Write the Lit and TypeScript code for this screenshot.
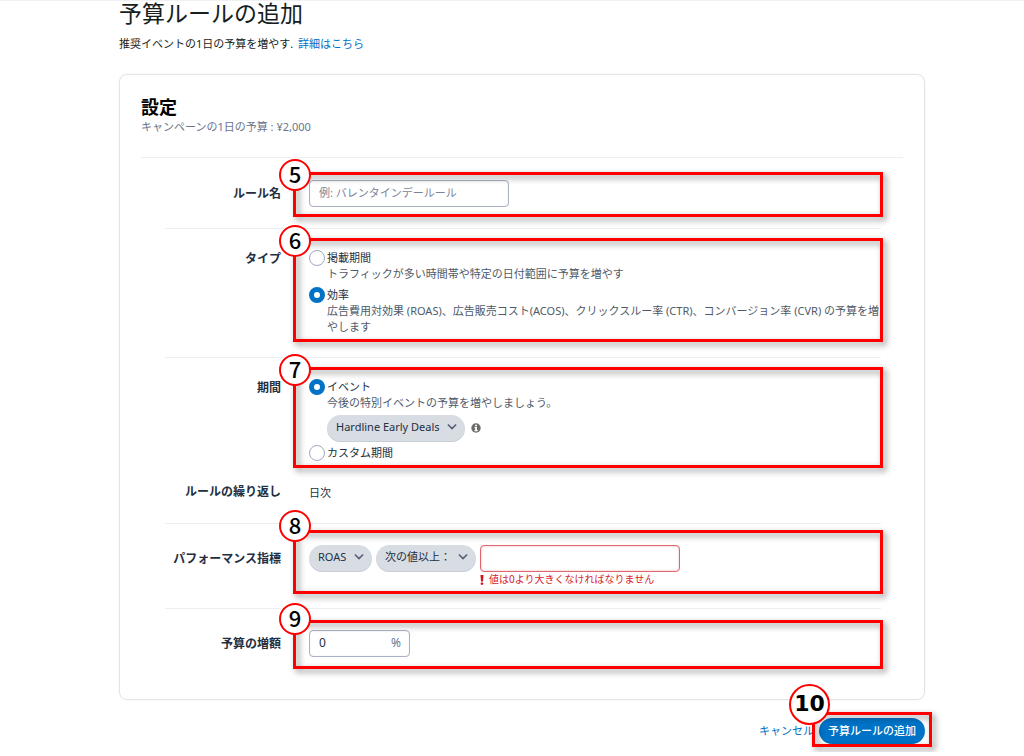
import { LitElement, html, css, svg, nothing } from "lit";
import { customElement, property, state } from "lit/decorators.js";

const chevron = html`<svg class="chevron" viewBox="0 0 10 6" width="10" height="6" aria-hidden="true">
  ${svg`<path d="M1.4 1 L5 4.6 L8.6 1" fill="none" stroke="#5a6478" stroke-width="1.7" stroke-linecap="round" stroke-linejoin="round"/>`}
</svg>`;

const infoIcon = html`<svg class="info" viewBox="0 0 10 10" width="10" height="10" role="img" aria-label="情報">
  ${svg`<circle cx="5" cy="5" r="4.7" fill="#6b6b6b"/>
  <rect x="4.1" y="1.7" width="1.9" height="1.6" fill="#fff"/>
  <path d="M3.5 4.1h2.5v3h.7v1.1H3.4V7.1h.8V5.2h-.7z" fill="#fff"/>`}
</svg>`;

const alertIcon = html`<svg viewBox="0 0 4 10" width="4" height="10" aria-hidden="true">
  ${svg`<path d="M.5 0h3l-.5 6.4H1z" fill="#d6141c"/><rect x=".7" y="7.5" width="2.5" height="2.3" rx=".6" fill="#d6141c"/>`}
</svg>`;

/** Numbered red frame laid over the part of the form that a step explains. */
@customElement("step-callout")
export class StepCallout extends LitElement {
  @property({ type: Number }) step = 0;

  static styles = css`
    :host {
      position: absolute;
      pointer-events: none;
      box-sizing: border-box;
    }
    .frame {
      box-sizing: border-box;
      width: 100%;
      height: 100%;
      border: 3px solid #fe0000;
      filter: drop-shadow(3px 3px 3px rgba(0, 0, 0, 0.45));
    }
    .badge {
      position: absolute;
      left: -14px;
      top: var(--badge-top, -13px);
      box-sizing: border-box;
      width: 32px;
      height: 32px;
      padding-bottom: 5px;
      border: 2px solid #fe0000;
      border-radius: 50%;
      background: #fff;
      color: #000;
      display: flex;
      align-items: center;
      justify-content: center;
      font: 500 22px/22px "Noto Sans CJK JP", sans-serif;
    }
    .wide {
      left: -23px;
      width: 41px;
      height: 41px;
      padding-bottom: 1px;
      font: 700 22px/36px "DejaVu Sans", sans-serif;
    }
  `;

  render() {
    return html`<div class="frame"></div>
      <div class="badge ${this.step > 9 ? "wide" : ""}">${this.step}</div>`;
  }
}

@customElement("app-root")
export class AppRoot extends LitElement {
  @state() private type = "performance";
  @state() private period = "event";

  static styles = css`
    :host {
      display: block;
      border-top: 1px solid #f0f1f2;
      background: #fff;
      color: #232f3f;
      font: 11px/16px "Noto Sans", "Noto Sans CJK JP", sans-serif;
    }
    * {
      box-sizing: border-box;
    }
    .page {
      padding: 0 99px 8px 119px;
    }
    h1,
    h2,
    p {
      margin: 0;
    }
    h1 {
      color: #161e1e;
      font-size: 23px;
      line-height: 25px;
      font-weight: 400;
    }
    a {
      color: #0073c7;
      text-decoration: none;
    }
    .lead {
      margin-top: 10px;
      color: #161e1e;
    }
    .lead a {
      margin-left: 2px;
    }
    .card {
      margin-top: 22px;
      padding: 21px 21px 22px;
      border: 1px solid #e2e4e6;
      border-radius: 8px;
      box-shadow: 0 0 2px #e9ebed;
    }
    h2 {
      color: #000;
      font-size: 18px;
      line-height: 22px;
      font-weight: 700;
    }
    .budget {
      margin-top: 1px;
      color: #6c7489;
    }
    .rows {
      margin-top: 22px;
      padding: 1px 22px 20px 24px;
      border-top: 1px solid #eceef0;
    }
    .row {
      display: grid;
      grid-template-columns: 116px 1fr;
      column-gap: 28px;
      padding-top: 21px;
    }
    .ruled {
      padding-bottom: 21px;
      border-bottom: 1px solid #eceef0;
    }
    .label {
      text-align: right;
      font-size: 12px;
      font-weight: 700;
      line-height: 18px;
      white-space: nowrap;
    }
    .centered {
      line-height: 27px;
    }
    .control {
      position: relative;
    }
    .choices {
      padding-bottom: 1px;
    }
    .text {
      line-height: 19px;
    }
    step-callout {
      left: -16px;
      right: -2px;
      top: -12px;
      bottom: -6px;
    }
    .callout-name {
      top: -8px;
      bottom: -10px;
    }
    .callout-metric {
      top: -15px;
      bottom: -7px;
      --badge-top: -20px;
    }
    .callout-increase {
      top: -10px;
      bottom: -12px;
      --badge-top: -17px;
    }
    .field {
      display: flex;
      align-items: center;
      height: 27px;
      width: 200px;
      padding: 0 8px 1px 9px;
      border: 1px solid #a9b1c5;
      border-radius: 4px;
      background: #fff;
      box-shadow: inset 0 0 1px #c5cbd8;
    }
    .field input {
      flex: 1;
      min-width: 0;
      padding: 0;
      border: 0;
      outline: 0;
      background: none;
      color: #232f3f;
      font: inherit;
    }
    .field input::placeholder {
      color: #7b8397;
      opacity: 1;
    }
    .percent {
      width: 101px;
      color: #6c7489;
      font-size: 12px;
    }
    .invalid {
      border-color: #e0676b;
      box-shadow: inset 0 0 2px #e9a0a2;
    }
    .option {
      display: grid;
      grid-template-columns: 16px 1fr;
      column-gap: 2px;
    }
    .option + .option {
      margin-top: 5px;
    }
    .option input {
      appearance: none;
      margin: 0;
      width: 16px;
      height: 16px;
      border: 1px solid #9fa9bf;
      border-radius: 50%;
      background: #fff;
    }
    .option input:checked {
      border: 5px solid #0073c7;
    }
    .option .detail {
      grid-column: 2;
      color: #4e5a68;
    }
    .picker-line {
      grid-column: 2;
      display: flex;
      align-items: center;
      gap: 6px;
      margin-top: 4px;
    }
    .period .option + .option {
      margin-top: 3px;
    }
    .select {
      display: inline-grid;
      align-items: center;
    }
    .select select,
    .select .chevron {
      grid-area: 1 / 1;
    }
    .select .chevron {
      justify-self: end;
      margin: 0 8px 3px 0;
      pointer-events: none;
    }
    .info {
      margin-bottom: 1px;
    }
    select {
      appearance: none;
      height: 27px;
      margin: 0;
      padding: 0 25px 3px 9px;
      border: 0;
      border-radius: 14px;
      background: #d8dde4;
      box-shadow: inset 0 -1px 0 #c9cfd7;
      color: #232f3f;
      font: inherit;
    }
    .metric {
      display: flex;
      align-items: flex-start;
      gap: 4px;
    }
    .error {
      display: flex;
      align-items: center;
      gap: 5px;
      color: #d6222a;
      font-size: 10px;
      line-height: 15px;
    }
    .actions {
      display: flex;
      justify-content: flex-end;
      align-items: center;
      gap: 5px;
      margin-top: 18px;
    }
    .submit {
      position: relative;
    }
    .submit step-callout {
      left: -7px;
      right: -7px;
      top: -6px;
      bottom: -3px;
      --badge-top: -28px;
    }
    button {
      display: block;
      height: 26px;
      margin: 0;
      padding: 0 9px 1px;
      border: 0;
      border-radius: 13px;
      background: #0073c7;
      color: #fff;
      font: inherit;
      font-weight: 500;
    }
  `;

  private radio(group: "type" | "period", value: string, text: string, detail: string, extra: unknown = nothing) {
    const id = `${group}-${value}`;
    return html`<div class="option">
      <input
        type="radio"
        id=${id}
        name=${group}
        .checked=${this[group] === value}
        @change=${() => (this[group] = value)}
      />
      <label for=${id}>${text}</label>
      ${detail ? html`<span class="detail">${detail}</span>` : nothing} ${extra}
    </div>`;
  }

  private picker(label: string, text: string) {
    return html`<span class="select">
      <select aria-label=${label}>
        <option>${text}</option>
      </select>
      ${chevron}
    </span>`;
  }

  render() {
    return html`<main class="page">
      <h1>予算ルールの追加</h1>
      <p class="lead">推奨イベントの1日の予算を増やす. <a href="#help">詳細はこちら</a></p>

      <section class="card">
        <h2>設定</h2>
        <p class="budget">キャンペーンの1日の予算 : ¥2,000</p>

        <div class="rows">
          <div class="row ruled">
            <label class="label centered" for="rule-name">ルール名</label>
            <div class="control">
              <div class="field">
                <input id="rule-name" type="text" placeholder="例: バレンタインデールール" />
              </div>
              <step-callout class="callout-name" step="5"></step-callout>
            </div>
          </div>

          <div class="row ruled">
            <span class="label" id="type-label">タイプ</span>
            <div class="control choices" role="radiogroup" aria-labelledby="type-label">
              ${this.radio("type", "schedule", "掲載期間", "トラフィックが多い時間帯や特定の日付範囲に予算を増やす")}
              ${this.radio(
                "type",
                "performance",
                "効率",
                "広告費用対効果 (ROAS)、広告販売コスト(ACOS)、クリックスルー率 (CTR)、コンバージョン率 (CVR) の予算を増やします"
              )}
              <step-callout step="6"></step-callout>
            </div>
          </div>

          <div class="row">
            <span class="label" id="period-label">期間</span>
            <div class="control choices period" role="radiogroup" aria-labelledby="period-label">
              ${this.radio(
                "period",
                "event",
                "イベント",
                "今後の特別イベントの予算を増やしましょう。",
                html`<div class="picker-line">${this.picker("イベント", "Hardline Early Deals")} ${infoIcon}</div>`
              )}
              ${this.radio("period", "custom", "カスタム期間", "")}
              <step-callout step="7"></step-callout>
            </div>
          </div>

          <div class="row ruled">
            <span class="label">ルールの繰り返し</span>
            <div class="control text">日次</div>
          </div>

          <div class="row ruled">
            <label class="label centered" for="metric-value">パフォーマンス指標</label>
            <div class="control metric">
              ${this.picker("指標", "ROAS")} ${this.picker("条件", "次の値以上：")}
              <div>
                <div class="field invalid">
                  <input id="metric-value" type="text" aria-invalid="true" aria-describedby="metric-error" />
                </div>
                <div class="error" id="metric-error">${alertIcon}値は0より大きくなければなりません</div>
              </div>
              <step-callout class="callout-metric" step="8"></step-callout>
            </div>
          </div>

          <div class="row">
            <label class="label centered" for="increase">予算の増額</label>
            <div class="control">
              <div class="field percent"><input id="increase" type="text" value="0" />%</div>
              <step-callout class="callout-increase" step="9"></step-callout>
            </div>
          </div>
        </div>
      </section>

      <div class="actions">
        <a href="#cancel">キャンセル</a>
        <div class="submit">
          <button type="button">予算ルールの追加</button>
          <step-callout step="10"></step-callout>
        </div>
      </div>
    </main>`;
  }
}
